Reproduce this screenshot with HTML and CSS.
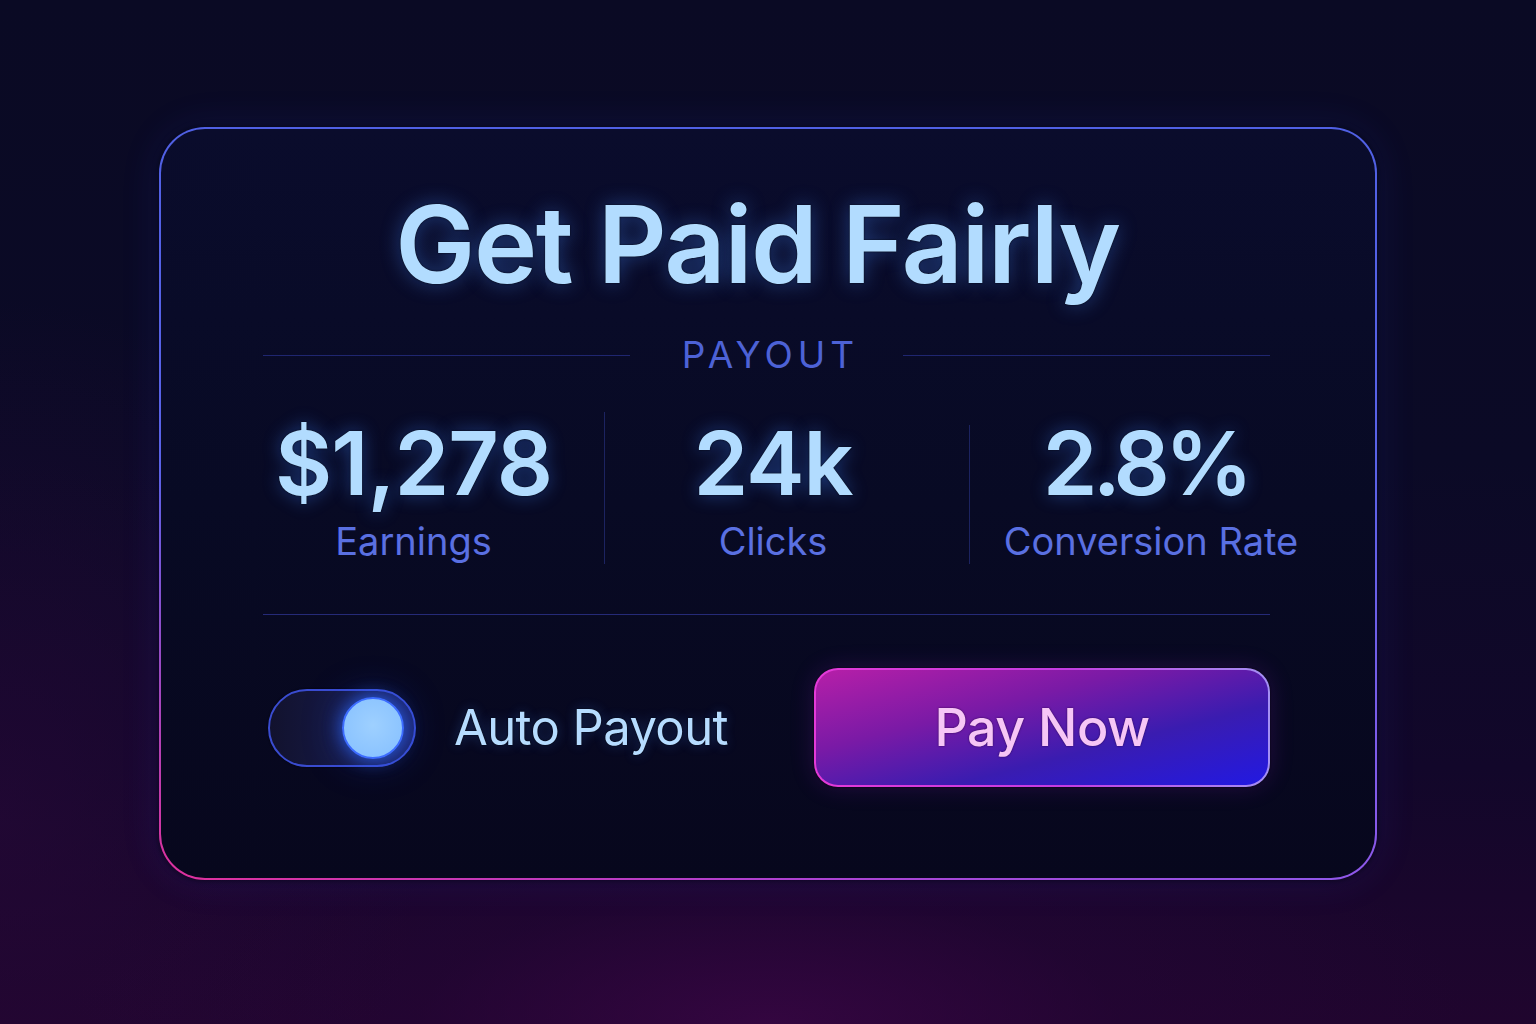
FILE: index.html
```html
<!DOCTYPE html>
<html lang="en">
<head>
<meta charset="utf-8">
<title>Get Paid Fairly</title>
<link rel="stylesheet" href="styles.css">
</head>
<body>
<main class="card">
  <h1 class="title">Get Paid Fairly</h1>
  <div class="section-head">
    <span class="rule"></span>
    <span class="section-label">PAYOUT</span>
    <span class="rule rule-right"></span>
  </div>
  <div class="stats">
    <div class="stat stat-1">
      <div class="stat-value">$1,278</div>
      <div class="stat-label">Earnings</div>
    </div>
    <span class="vdivider"></span>
    <div class="stat stat-2">
      <div class="stat-value">24k</div>
      <div class="stat-label">Clicks</div>
    </div>
    <span class="vdivider vdivider-2"></span>
    <div class="stat stat-3">
      <div class="stat-value stat-value-tight">2.8%</div>
      <div class="stat-label">Conversion Rate</div>
    </div>
  </div>
  <div class="hdivider"></div>
  <div class="actions">
    <div class="auto">
      <div class="toggle"><span class="knob"></span></div>
      <span class="auto-label">Auto Payout</span>
    </div>
    <button class="pay-btn">Pay Now</button>
  </div>
</main>
</body>
</html>
```

FILE: styles.css
```css
* { box-sizing: border-box; }

html, body {
  margin: 0;
  height: 100%;
}

body {
  width: 1536px;
  height: 1024px;
  overflow: hidden;
  font-family: "Inter", "Noto Sans", sans-serif;
  background:
    radial-gradient(ellipse 700px 260px at 50% 100%, rgba(58, 6, 70, 0.75) 0%, rgba(40, 5, 56, 0.4) 50%, rgba(20, 5, 40, 0) 100%),
    radial-gradient(ellipse 420px 520px at 0% 80%, rgba(40, 8, 56, 0.6) 0%, rgba(30, 6, 48, 0) 100%),
    linear-gradient(to bottom, #0a0a24 0%, #0b0a26 45%, #12072a 75%, #20052e 100%);
  display: flex;
  justify-content: center;
  align-items: flex-start;
  padding-top: 127px;
}

.card {
  width: 1218px;
  border: 2px solid transparent;
  border-radius: 46px;
  padding: 61px 105px 91px 102px;
  background:
    linear-gradient(to bottom, #0a0c2c 0%, #080a24 50%, #07071d 100%) padding-box,
    linear-gradient(to bottom, #5060e4 0%, #5a62e8 45%, rgba(90, 98, 232, 0) 100%) border-box,
    linear-gradient(to right, #e0309c 0%, #b040d0 50%, #8e58ea 100%) border-box;
  box-shadow: 0 0 40px rgba(60, 80, 255, 0.12), 0 0 6px rgba(0, 0, 0, 0.8);
  display: flex;
  flex-direction: column;
}

.title {
  margin: 0;
  padding-right: 18px;
  font-size: 107px;
  line-height: 108px;
  font-weight: 600;
  letter-spacing: -1.4px;
  color: #b2dcff;
  text-align: center;
  text-shadow: 0 0 2px rgba(0, 0, 0, 0.9), 0 0 20px rgba(70, 140, 255, 0.4);
}

.section-head {
  margin-top: 37px;
  height: 40px;
  display: flex;
  align-items: center;
}

.rule {
  flex: 1;
  height: 1px;
  background: #1f2670;
}

.section-label {
  margin: 0 44px 0 52px;
  font-size: 37px;
  line-height: 40px;
  font-weight: 400;
  letter-spacing: 5px;
  color: #4d62d6;
}

.stats {
  margin-top: 44px;
  display: flex;
  align-items: stretch;
}

.stat {
  display: flex;
  flex-direction: column;
  align-items: center;
}

.stat-1 { width: 342px; padding-right: 40px; }
.stat-2 { width: 365px; padding-right: 28px; }
.stat-3 { width: 300px; padding-left: 62px; }

.stat-value {
  font-size: 88px;
  line-height: 88px;
  font-weight: 600;
  letter-spacing: -1px;
  color: #b2dcff;
  white-space: nowrap;
  text-shadow: 0 0 2px rgba(0, 0, 0, 0.9), 0 0 18px rgba(60, 130, 255, 0.42);
}

.stat-value-tight {
  letter-spacing: -5px;
  padding-right: 5px;
  margin-left: -6px;
}

.stat-label {
  margin-top: 11px;
  font-size: 38px;
  line-height: 46px;
  font-weight: 400;
  color: #5a70e2;
  white-space: nowrap;
}

.vdivider {
  width: 1px;
  margin-top: -7px;
  background: #1c2360;
}

.vdivider-2 { margin-top: 6px; }

.hdivider {
  margin-top: 50px;
  height: 1px;
  background: #252a78;
}

.actions {
  margin-top: 53px;
  display: flex;
  align-items: center;
  justify-content: space-between;
}

.auto {
  display: flex;
  align-items: center;
  margin-left: 5px;
}

.toggle {
  width: 148px;
  height: 78px;
  border-radius: 39px;
  border: 2px solid #3a4cd0;
  background: linear-gradient(to right, #12122e 0%, #161a46 55%, #1c2468 100%);
  box-shadow: 0 0 2px rgba(0, 0, 0, 0.9);
  display: flex;
  align-items: center;
  justify-content: flex-end;
  padding-right: 10px;
}

.knob {
  width: 62px;
  height: 62px;
  border-radius: 50%;
  background: radial-gradient(circle at 50% 45%, #9ed0ff 0%, #8cc4ff 70%, #80baff 100%);
  border: 2px solid #3c6cff;
  box-shadow: 0 0 18px rgba(50, 110, 255, 0.8), 0 0 40px rgba(40, 80, 255, 0.35);
}

.auto-label {
  margin-left: 38px;
  font-size: 49px;
  line-height: 60px;
  font-weight: 400;
  letter-spacing: -0.6px;
  color: #b6dcff;
  text-shadow: 0 0 2px rgba(0, 0, 0, 0.9), 0 0 12px rgba(70, 140, 255, 0.3);
}

.pay-btn {
  width: 456px;
  height: 119px;
  border: 2px solid transparent;
  border-radius: 24px;
  font-family: "Inter", "Noto Sans", sans-serif;
  font-size: 52px;
  font-weight: 500;
  letter-spacing: -0.5px;
  color: #f6c6f6;
  text-shadow: 0 0 2px rgba(40, 0, 60, 0.9);
  cursor: pointer;
  background:
    linear-gradient(to bottom right, #b61fa8 0%, #7a1aa6 35%, #3a1cb0 65%, #2219e2 100%) padding-box,
    linear-gradient(to right, #e43ad8 0%, #c43ce2 55%, #a490f4 100%) border-box;
  box-shadow: 0 0 2px rgba(0, 0, 0, 0.9), 0 0 24px rgba(160, 40, 220, 0.18);
}
```
